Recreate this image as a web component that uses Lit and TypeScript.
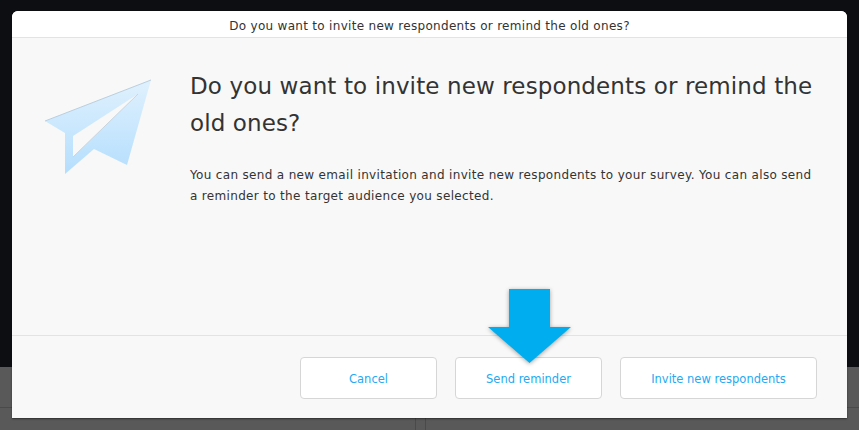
import { LitElement, html, css } from "lit";
import { customElement } from "lit/decorators.js";

@customElement("app-root")
export class AppRoot extends LitElement {
  static styles = css`
    :host { display: block; position: relative; width: 859px; height: 430px; overflow: hidden; font-family: "DejaVu Sans", sans-serif; color: #333; }
    .bg-top { height: 367px; background: #0d0e12; }
    .bg-bottom { height: 63px; background: #595959; position: relative; }
    .hline { height: 1px; background: #4a4a4a; margin-top: 40px; position: absolute; left: 0; right: 0; }
    .vline { position: absolute; top: 0; bottom: 0; width: 1px; background: #4a4a4a; }
    .v1 { left: 415px; }
    .v2 { left: 425px; }
    .modal { position: absolute; left: 12px; top: 11px; width: 835px; height: 407px; box-sizing: border-box; background: #f8f8f8; border-radius: 6px 6px 0 0; display: flex; flex-direction: column; box-shadow: 0 1px 2px rgba(0,0,0,.5); }
    .header { height: 27px; box-sizing: border-box; background: #fff; border-bottom: 1px solid #e3e3e3; border-radius: 6px 6px 0 0; text-align: center; font-size: 12px; line-height: 30px; letter-spacing: 0.3px; color: #333; }
    .body { flex: 1; display: flex; min-height: 0; }
    .icon { width: 178px; flex: none; }
    .icon svg { display: block; }
    .text { flex: 1; padding-right: 30px; }
    h1 { margin: 30px 0 0; font-size: 23px; font-weight: 400; line-height: 37px; letter-spacing: 0.12px; color: #333; }
    p { margin: 23px 0 0; font-size: 12px; line-height: 21px; letter-spacing: 0.33px; color: #333; }
    .footer { height: 83px; box-sizing: border-box; border-top: 1px solid #e3e3e3; display: flex; justify-content: flex-end; gap: 18px; padding: 21px 30px 0 0; }
    button { height: 42px; box-sizing: border-box; background: #fff; border: 1px solid #d6d6d6; border-radius: 4px; color: #25a9f3; font: 400 11.5px/1 "DejaVu Sans", sans-serif; letter-spacing: 0; padding: 4px 0 0; }
    .b1 { width: 137px; } .b2 { width: 147px; } .b3 { width: 197px; }
    .arrow { position: absolute; left: 484px; top: 285px; filter: drop-shadow(0 1px 2px rgba(0,0,0,.35)); }
  `;

  render() {
    return html`
      <div class="bg-top"></div>
      <div class="bg-bottom"><div class="hline"></div><div class="vline v1"></div><div class="vline v2"></div></div>
      <div class="modal">
        <div class="header">Do you want to invite new respondents or remind the old ones?</div>
        <div class="body">
          <div class="icon">
            <svg width="178" height="150" viewBox="0 0 178 150">
              <defs><linearGradient id="g" x1="0" y1="0" x2="0" y2="1"><stop offset="0" stop-color="#e0f1fd"/><stop offset="1" stop-color="#b4defd"/></linearGradient></defs>
              <path fill="url(#g)" fill-rule="evenodd" d="M139 42 L33 83 L53 95 L53 136 L82 111 L115 127 Z M126 56 L61 98 L61 119 Z"/>
              <path fill="none" stroke="#b9cfe0" stroke-width="1" d="M139 42 L33 83"/>
              <path fill="none" stroke="#c9d6e0" stroke-width="1" d="M126 56 L61 119"/>
            </svg>
          </div>
          <div class="text">
            <h1>Do you want to invite new respondents or remind the old ones?</h1>
            <p>You can send a new email invitation and invite new respondents to your survey. You can also send a reminder to the target audience you selected.</p>
          </div>
        </div>
        <div class="footer">
          <button class="b1">Cancel</button>
          <button class="b2">Send reminder</button>
          <button class="b3">Invite new respondents</button>
        </div>
      </div>
      <svg class="arrow" width="92" height="84" viewBox="0 0 92 84"><path fill="#00aeef" d="M25 4 H66 V42 H87 L45.500 78 L4 42 H25 Z"/></svg>
    `;
  }
}
